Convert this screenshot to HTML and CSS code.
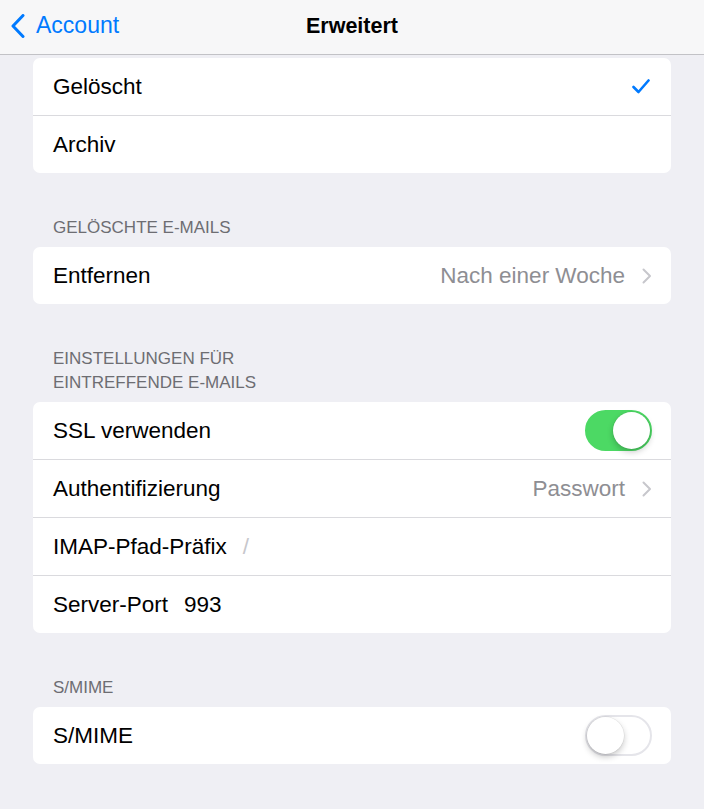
FILE: index.html
```html
<!DOCTYPE html>
<html lang="de">
<head>
    <meta charset="UTF-8">
    <meta name="viewport" content="width=device-width, initial-scale=1.0">
    <title>Erweitert</title>
    <link rel="stylesheet" href="styles.css">
</head>
<body>
    <div class="navbar">
        <a class="back" href="#">
            <svg class="back-icon" width="14" height="24" viewBox="0 0 14 24">
                <path d="M12 1.5 L2 12 L12 22.5" fill="none" stroke="#007aff" stroke-width="3" stroke-linecap="round" stroke-linejoin="round"/>
            </svg>
            Account
        </a>
        <h1 class="title">Erweitert</h1>
    </div>

    <div class="content">
        <div class="group first">
            <div class="row">
                <span class="label">Gelöscht</span>
                <svg class="check" width="18" height="15" viewBox="0 0 18 15">
                    <path d="M1.5 8 L6.5 13 L16.5 1.5" fill="none" stroke="#007aff" stroke-width="2.6" stroke-linecap="round" stroke-linejoin="round"/>
                </svg>
            </div>
            <div class="row">
                <span class="label">Archiv</span>
            </div>
        </div>

        <div class="section-header">Gelöschte E-Mails</div>
        <div class="group">
            <div class="row">
                <span class="label">Entfernen</span>
                <span class="value">Nach einer Woche</span>
                <svg class="chevron" width="10" height="16" viewBox="0 0 10 16">
                    <path d="M1.5 1.5 L8 8 L1.5 14.5" fill="none" stroke="#c7c7cc" stroke-width="2" stroke-linecap="round" stroke-linejoin="round"/>
                </svg>
            </div>
        </div>

        <div class="section-header">Einstellungen für<br>eintreffende E-Mails</div>
        <div class="group">
            <div class="row">
                <span class="label">SSL verwenden</span>
                <span class="switch on"><span class="knob"></span></span>
            </div>
            <div class="row">
                <span class="label">Authentifizierung</span>
                <span class="value">Passwort</span>
                <svg class="chevron" width="10" height="16" viewBox="0 0 10 16">
                    <path d="M1.5 1.5 L8 8 L1.5 14.5" fill="none" stroke="#c7c7cc" stroke-width="2" stroke-linecap="round" stroke-linejoin="round"/>
                </svg>
            </div>
            <div class="row">
                <span class="label">IMAP-Pfad-Präfix</span>
                <span class="field placeholder">/</span>
            </div>
            <div class="row">
                <span class="label">Server-Port</span>
                <span class="field">993</span>
            </div>
        </div>

        <div class="section-header">S/MIME</div>
        <div class="group">
            <div class="row">
                <span class="label">S/MIME</span>
                <span class="switch"><span class="knob"></span></span>
            </div>
        </div>
    </div>
</body>
</html>
```

FILE: styles.css
```css
body {
    margin: 0;
    padding: 0;
    background-color: #efeff4;
    font-family: "Liberation Sans", Arial, sans-serif;
    color: #000;
}
.navbar {
    height: 54px;
    background-color: #f7f7f8;
    border-bottom: 1px solid #c2c2c6;
    display: flex;
    align-items: center;
    justify-content: center;
    position: relative;
}
.back {
    position: absolute;
    left: 11px;
    top: 0;
    height: 54px;
    display: flex;
    align-items: center;
    gap: 11px;
    color: #007aff;
    text-decoration: none;
    font-size: 23px;
    padding-bottom: 3px;
    box-sizing: border-box;
}
.title {
    margin: 0;
    font-size: 21.5px;
    font-weight: bold;
    padding-bottom: 2px;
}
.content {
    padding: 0 33px 40px;
}
.section-header {
    padding: 43px 20px 7px;
    font-size: 17px;
    line-height: 24px;
    color: #6d6d72;
    text-transform: uppercase;
}
.group {
    background-color: #fff;
    border-radius: 7px;
    overflow: hidden;
}
.group.first {
    margin-top: 3px;
}
.row {
    height: 57px;
    display: flex;
    align-items: center;
    padding: 0 19px 0 20px;
    position: relative;
    font-size: 22.5px;
}
.row + .row {
    border-top: 1px solid #dadade;
}
.label {
    flex: none;
}
.field {
    margin-left: 16px;
    flex: 1;
}
.placeholder {
    color: #c7c7cc;
}
.value {
    margin-left: auto;
    color: #8e8e93;
    margin-right: 17px;
}
.check {
    margin-left: auto;
    margin-right: 2px;
}
.chevron {
    flex: none;
}
.switch {
    margin-left: auto;
    width: 67px;
    height: 41px;
    border-radius: 21px;
    box-sizing: border-box;
    border: 2px solid #e5e5ea;
    background-color: #fff;
    position: relative;
}
.switch.on {
    background-color: #4cd964;
    border-color: #4cd964;
}
.knob {
    position: absolute;
    top: 0;
    left: 0;
    width: 37px;
    height: 37px;
    border-radius: 50%;
    background-color: #fff;
    box-shadow: 0 3px 6px rgba(0, 0, 0, 0.22), 0 0 0 0.5px rgba(0, 0, 0, 0.08);
}
.switch.on .knob {
    left: 26px;
}
```
